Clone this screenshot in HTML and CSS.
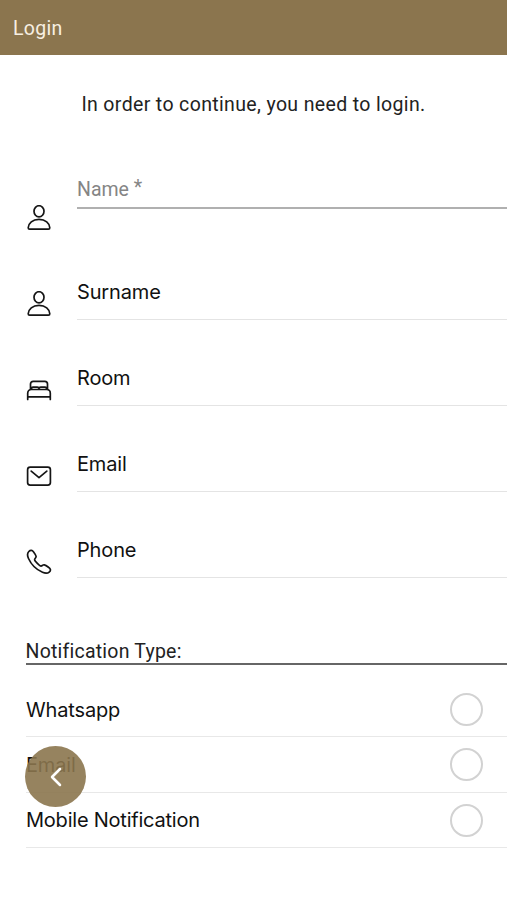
FILE: index.html
```html
<!DOCTYPE html>
<html lang="en">
<head>
    <meta charset="UTF-8">
    <meta name="viewport" content="width=device-width, initial-scale=1.0">
    <title>Login</title>
    <link rel="stylesheet" href="styles.css">
</head>
<body>
    <header class="header"><span class="header-title">Login</span></header>
    <main class="content">
        <p class="intro"><span class="intro-text">In order to continue, you need to login.</span></p>
        <form class="login-form">
            <div class="form-row first">
                <svg class="icon" viewBox="0 0 26 26"><ellipse cx="13" cy="6.3" rx="5" ry="5.6"/><path d="M2.2 22.7c.3-4.500 4.300-8.300 10.800-8.300s10.500 3.800 10.800 8.300c0 .9-.6 1.400-1.400 1.400H3.600c-.8 0-1.400-.5-1.400-1.400z"/></svg>
                <label class="field required"><span class="label-name">Name <span class="asterisk">*</span></span></label>
            </div>
            <div class="form-row">
                <svg class="icon" viewBox="0 0 26 26"><ellipse cx="13" cy="6.3" rx="5" ry="5.6"/><path d="M2.2 22.7c.3-4.500 4.300-8.300 10.800-8.300s10.500 3.800 10.800 8.300c0 .9-.6 1.400-1.400 1.400H3.600c-.8 0-1.400-.5-1.400-1.400z"/></svg>
                <label class="field"><span class="label-surname">Surname</span></label>
            </div>
            <div class="form-row">
                <svg class="icon" viewBox="0 0 26 26"><path d="M4.500 12.500V7c0-1.700 1-2.700 2.700-2.700h11.600c1.700 0 2.700 1 2.700 2.700v5.500M1.700 22.500v-6.300c0-2.300 1.400-3.700 3.700-3.700h15.200c2.300 0 3.700 1.400 3.700 3.700v6.300M1.700 19.800h22.600M5.500 12.300v-.8c0-.9.5-1.400 1.400-1.400h4.200c1 0 1.900.6 1.900 1.500 0-.9.9-1.500 1.900-1.500h4.200c.9 0 1.400.5 1.400 1.400v.8"/></svg>
                <label class="field"><span class="label-room">Room</span></label>
            </div>
            <div class="form-row">
                <svg class="icon" viewBox="0 0 26 26"><rect x="1.600" y="4.200" width="22.800" height="17.900" rx="2.600"/><path d="M5.200 8.100l7.800 6.500 7.800-6.500"/></svg>
                <label class="field"><span class="label-email">Email</span></label>
            </div>
            <div class="form-row">
                <svg class="icon" viewBox="0 0 26 26"><path d="M22.500 18.300c-1.600-1.300-2.700-2.200-4.200-2.500-1.400-.3-2.200 1.300-3.300 1.300-1.200 0-6.400-5.300-6.400-6.400 0-1.200 1.700-1.800 1.500-3.300-.2-1.400-1.500-3.200-2.500-4.500C6.200 1 4.500.8 2.800 2.500 1.100 4.200 1.400 7 2.500 9.500 5 15 10.500 20.700 16.500 23.300c2.500 1.100 5 1.300 6.700-.2 1.900-1.700 1.600-3.200-.7-4.800z"/></svg>
                <label class="field"><span class="label-phone">Phone</span></label>
            </div>
            <div class="section-title"><span class="section-text">Notification Type:</span></div>
            <div class="option"><span class="option-whatsapp">Whatsapp</span><span class="radio"></span></div>
            <div class="option"><span class="option-email">Email</span><span class="radio"></span></div>
            <div class="option"><span class="option-mobile">Mobile Notification</span><span class="radio"></span></div>
        </form>
    </main>
    <button class="back-button" type="button" aria-label="Back">
        <svg class="back-icon" viewBox="0 0 12 20"><path d="M10 2L2 10l8 8"/></svg>
    </button>
</body>
</html>
```

FILE: styles.css
```css
* {
    box-sizing: border-box;
}

body {
    margin: 0;
    min-height: 100vh;
    background-color: #fff;
    color: #111;
    font-family: Inter, Roboto, sans-serif;
    font-size: 20px;
    letter-spacing: -0.15px;
    overflow: hidden;
}

.header {
    height: 54.5px;
    padding: 3px 13px 0;
    display: flex;
    align-items: center;
    background-color: #8b754e;
    color: #f7efe2;
    font-family: Roboto, sans-serif;
    font-size: 19.5px;
    letter-spacing: 0.3px;
}

.intro {
    margin: 0;
    height: 93.7px;
    padding: 38px 0 0;
    text-align: center;
    font-family: Roboto, sans-serif;
    font-size: 19.5px;
    line-height: 24px;
    letter-spacing: 0.36px;
    color: #222;
}

.form-row {
    height: 85.9px;
    padding-left: 26px;
    display: flex;
    align-items: flex-end;
    gap: 25px;
}

.icon {
    width: 26px;
    height: 26px;
    margin-bottom: 3px;
    flex-shrink: 0;
    fill: none;
    stroke: #151515;
    stroke-width: 1.7;
    stroke-linecap: round;
    stroke-linejoin: round;
}

.field {
    flex: 1;
    height: 40px;
    line-height: 24px;
    border-bottom: 1px solid #e4e4e4;
}

.first .field {
    height: 32px;
    margin-bottom: 25.3px;
    padding-top: 1px;
    border-bottom: 2px solid #b0b0b0;
    color: #858585;
    font-family: Roboto, sans-serif;
    font-size: 19.5px;
    letter-spacing: 0;
}

.asterisk {
    display: inline-block;
    line-height: 1;
    transform: translateY(-2px);
}

.section-title {
    height: 87px;
    margin-left: 25.5px;
    padding-top: 63px;
    border-bottom: 2px solid #666;
    color: #222;
    font-family: Roboto, sans-serif;
    font-size: 19.5px;
    line-height: 22px;
    letter-spacing: 0.22px;
}

.option {
    height: 55.5px;
    margin-left: 26px;
    padding-right: 24px;
    display: flex;
    align-items: center;
    justify-content: space-between;
    border-bottom: 1px solid #e8e8e8;
}

.section-title + .option {
    height: 72.800px;
    padding-top: 18px;
}

.option-mobile {
    letter-spacing: -0.22px;
}

.radio {
    width: 33px;
    height: 33px;
    border: 2px solid #d2d2d2;
    border-radius: 50%;
}

.back-button {
    position: fixed;
    left: 25px;
    bottom: 93px;
    width: 61px;
    height: 61px;
    padding: 0;
    display: flex;
    align-items: center;
    justify-content: center;
    border: none;
    border-radius: 50%;
    background-color: rgba(139, 117, 78, 0.9);
}

.back-icon {
    width: 12px;
    height: 20px;
    fill: none;
    stroke: #fff;
    stroke-width: 2.500;
    stroke-linecap: round;
    stroke-linejoin: round;
}
```
